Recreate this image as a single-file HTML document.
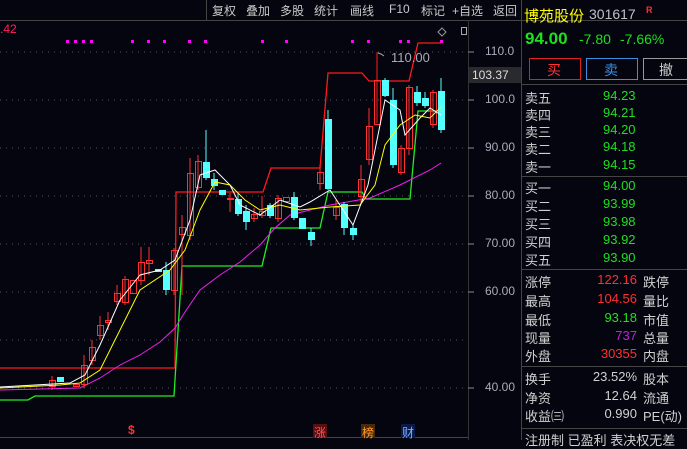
<!DOCTYPE html>
<html><head><meta charset="utf-8"><style>
body{margin:0;width:687px;height:440px;background:#05050f;overflow:hidden;font-family:"Liberation Sans","Noto Sans CJK SC",sans-serif;position:relative}
.t{position:absolute;white-space:nowrap}
.tb{position:absolute;top:2px;font-size:12px;color:#c8c8c8}
.lbl{position:absolute;left:525px;font-size:13px;color:#d0d0d0}
.v{position:absolute;font-size:13px;text-align:right}
.g{color:#1ee01e}.r{color:#ff3030}
</style></head><body>
<svg width="687" height="440" style="position:absolute;left:0;top:0">
<g stroke="#555" stroke-dasharray="1,5" stroke-width="1">
<line x1="0" y1="52" x2="468" y2="52"/><line x1="0" y1="100" x2="468" y2="100"/><line x1="0" y1="148" x2="468" y2="148"/><line x1="0" y1="196" x2="468" y2="196"/><line x1="0" y1="244" x2="468" y2="244"/><line x1="0" y1="292" x2="468" y2="292"/><line x1="0" y1="340" x2="468" y2="340"/><line x1="0" y1="388" x2="468" y2="388"/>
</g>
<line x1="0" y1="20.5" x2="687" y2="20.5" stroke="#444"/>
<line x1="206.5" y1="0" x2="206.5" y2="20" stroke="#444"/>
<line x1="521.5" y1="0" x2="521.5" y2="440" stroke="#444"/>
<line x1="468.5" y1="20" x2="468.5" y2="440" stroke="#333"/>
<line x1="0" y1="437.5" x2="468" y2="437.5" stroke="#444"/>
<g stroke="#888"><line x1="468" y1="52" x2="474" y2="52"/><line x1="468" y1="100" x2="474" y2="100"/><line x1="468" y1="148" x2="474" y2="148"/><line x1="468" y1="196" x2="474" y2="196"/><line x1="468" y1="244" x2="474" y2="244"/><line x1="468" y1="292" x2="474" y2="292"/><line x1="468" y1="388" x2="474" y2="388"/></g>
<g fill="#ff00ff"><rect x="66" y="40" width="3" height="3"/><rect x="74" y="40" width="3" height="3"/><rect x="82" y="40" width="3" height="3"/><rect x="90" y="40" width="3" height="3"/><rect x="131" y="40" width="3" height="3"/><rect x="147" y="40" width="3" height="3"/><rect x="163" y="40" width="3" height="3"/><rect x="188" y="40" width="3" height="3"/><rect x="204" y="40" width="3" height="3"/><rect x="261" y="40" width="3" height="3"/><rect x="285" y="40" width="3" height="3"/><rect x="351" y="40" width="3" height="3"/><rect x="367" y="40" width="3" height="3"/><rect x="399" y="40" width="3" height="3"/><rect x="407" y="40" width="3" height="3"/><rect x="440" y="40" width="3" height="3"/></g>
<polyline fill="none" stroke="#ff1a1a" stroke-width="1.3" points="0,368 175,368 176,192 240,192 263,192 271,168 320,168 328,73 362,73 369,81 409,81 418,43 441,43"/>
<line x1="377" y1="52" x2="377" y2="123" stroke="#ff1a1a"/>
<polyline fill="none" stroke="#22ee22" stroke-width="1.3" points="0,400 28,400 35,396 174,396 182,266 262,266 271,228 320,228 328,192 362,192 366,199 410,199 418,111 441,111"/>
<polyline fill="none" stroke="#ee22ee" stroke-width="1" points="0,390 80,388 100,378 120,365 140,355 160,342 175,328 185,312 200,290 220,275 240,262 260,245 275,228 290,215 310,210 330,205 370,198 400,185 430,170 441,163"/>
<g stroke-width="1">
<g stroke="#ff3030" fill="none">
<rect x="49.5" y="380.5" width="6" height="6"/><rect x="73.5" y="384.5" width="6" height="2"/><rect x="81.5" y="365.5" width="6" height="19"/><rect x="89.5" y="347.5" width="6" height="13"/><rect x="97.5" y="325.5" width="6" height="10"/><rect x="105.5" y="320.5" width="6" height="2"/><rect x="114.5" y="293.5" width="6" height="8"/><rect x="122.5" y="279.5" width="6" height="23"/><rect x="130.5" y="280.5" width="6" height="13"/><rect x="138.5" y="262.5" width="6" height="18"/><rect x="146.5" y="260.5" width="6" height="3"/><rect x="171.5" y="250.5" width="6" height="40"/><rect x="179.5" y="227.5" width="6" height="7"/><rect x="187.5" y="173.5" width="6" height="62"/><rect x="195.5" y="161.5" width="6" height="26"/><rect x="227.5" y="198.5" width="6" height="1"/>
<rect x="251.5" y="214.5" width="6" height="4"/><rect x="259.5" y="211.5" width="6" height="4"/><rect x="275.5" y="198.5" width="6" height="20"/><rect x="283.5" y="197.5" width="6" height="4"/><rect x="317.5" y="172.5" width="6" height="11"/><rect x="333.5" y="207.5" width="6" height="8"/><rect x="358.5" y="179.5" width="6" height="17"/><rect x="366.5" y="126.5" width="6" height="33"/><rect x="374.5" y="80.5" width="6" height="44"/><rect x="398.5" y="148.5" width="6" height="24"/><rect x="406.5" y="87.5" width="6" height="61"/><rect x="430.5" y="92.5" width="6" height="32"/>
<line x1="52" y1="376" x2="52" y2="390"/><line x1="84" y1="355" x2="84" y2="388"/><line x1="92" y1="340" x2="92" y2="365"/><line x1="100" y1="316" x2="100" y2="340"/><line x1="108" y1="312" x2="108" y2="330"/><line x1="117" y1="285" x2="117" y2="305"/><line x1="125" y1="276" x2="125" y2="305"/><line x1="141" y1="247" x2="141" y2="285"/><line x1="149" y1="247" x2="149" y2="275"/><line x1="174" y1="248" x2="174" y2="295"/><line x1="182" y1="215" x2="182" y2="295"/><line x1="190" y1="158" x2="190" y2="240"/><line x1="198" y1="155" x2="198" y2="190"/><line x1="230" y1="193" x2="230" y2="212"/><line x1="254" y1="208" x2="254" y2="222"/><line x1="262" y1="196" x2="262" y2="218"/><line x1="278" y1="195" x2="278" y2="222"/><line x1="320" y1="165" x2="320" y2="190"/><line x1="336" y1="200" x2="336" y2="220"/><line x1="361" y1="165" x2="361" y2="205"/><line x1="369" y1="108" x2="369" y2="165"/><line x1="401" y1="145" x2="401" y2="175"/><line x1="409" y1="85" x2="409" y2="155"/><line x1="433" y1="90" x2="433" y2="128"/>
</g>
<g fill="#54ffff" stroke="#54ffff">
<line x1="206" y1="130" x2="206" y2="180"/><line x1="214" y1="173" x2="214" y2="190"/><line x1="238" y1="193" x2="238" y2="216"/><line x1="246" y1="205" x2="246" y2="230"/><line x1="270" y1="203" x2="270" y2="218"/><line x1="294" y1="192" x2="294" y2="220"/><line x1="311" y1="228" x2="311" y2="246"/><line x1="328" y1="110" x2="328" y2="190"/><line x1="344" y1="202" x2="344" y2="235"/><line x1="353" y1="224" x2="353" y2="240"/><line x1="385" y1="78" x2="385" y2="97"/><line x1="393" y1="88" x2="393" y2="168"/><line x1="417" y1="86" x2="417" y2="106"/><line x1="425" y1="92" x2="425" y2="108"/><line x1="441" y1="78" x2="441" y2="133"/><line x1="166" y1="262" x2="166" y2="295"/>
<rect x="57.5" y="377.5" width="6" height="4"/><rect x="155.5" y="269.5" width="6" height="2"/><rect x="163.5" y="270.5" width="6" height="19"/><rect x="203.5" y="162.5" width="6" height="15"/><rect x="211.5" y="179.5" width="6" height="6"/><rect x="219.5" y="190.5" width="6" height="4"/><rect x="235.5" y="199.5" width="6" height="14"/><rect x="243.5" y="211.5" width="6" height="10"/><rect x="267.5" y="205.5" width="6" height="10"/><rect x="291.5" y="197.5" width="6" height="20"/><rect x="299.5" y="218.5" width="6" height="10"/><rect x="308.5" y="232.5" width="6" height="7"/><rect x="325.5" y="119.5" width="6" height="69"/><rect x="341.5" y="204.5" width="6" height="23"/><rect x="350.5" y="228.5" width="6" height="6"/><rect x="382.5" y="80.5" width="6" height="15"/><rect x="390.5" y="100.5" width="6" height="64"/><rect x="414.5" y="92.5" width="6" height="10"/><rect x="422.5" y="98.5" width="6" height="7"/><rect x="438.5" y="91.5" width="6" height="38"/>
</g></g>
<polyline fill="none" stroke="#ffff00" stroke-width="1" points="0,388 60,385 80,383 100,370 120,330 140,290 170,270 185,250 200,210 215,182 230,185 245,200 260,210 280,205 300,210 330,207 360,205 375,185 385,145 400,125 415,115 430,118 441,107"/>
<polyline fill="none" stroke="#ffffff" stroke-width="1" points="0,387 70,383 85,375 100,345 120,300 140,275 160,270 175,260 190,220 200,175 215,170 230,185 240,205 260,215 280,200 300,207 310,202 330,190 353,225 368,185 385,100 400,110 405,135 420,118 430,108 441,115"/>
<polyline fill="none" stroke="#aaa" points="378,53 381,54 384,56"/>
<rect x="469" y="67" width="52" height="16" fill="#2a2a2e"/>
<rect x="529.5" y="58.5" width="51" height="21" fill="none" stroke="#e02020"/>
<rect x="586.5" y="58.5" width="51" height="21" fill="none" stroke="#3a8ee0"/>
<rect x="643.5" y="58.5" width="50" height="21" fill="none" stroke="#999"/>
<g stroke="#444"><line x1="522" y1="84.5" x2="687" y2="84.5"/><line x1="522" y1="176.5" x2="687" y2="176.5"/><line x1="522" y1="269.5" x2="687" y2="269.5"/><line x1="522" y1="366.5" x2="687" y2="366.5"/><line x1="522" y1="428.5" x2="687" y2="428.5"/></g>
<rect x="461.5" y="27.5" width="5" height="7" fill="none" stroke="#aaa"/>
<path d="M442 28 l4 4 -4 4 -4 -4z" fill="none" stroke="#999"/>
<rect x="313" y="424" width="14" height="14" fill="#5a1010"/><rect x="361" y="424" width="14" height="14" fill="#4a2a08"/><rect x="401" y="424" width="14" height="14" fill="#0a1a4a"/>
</svg>
<div class="tb" style="left:212px">复权</div><div class="tb" style="left:246px">叠加</div><div class="tb" style="left:280px">多股</div><div class="tb" style="left:314px">统计</div><div class="tb" style="left:350px">画线</div><div class="tb" style="left:389px">F10</div><div class="tb" style="left:421px">标记</div><div class="tb" style="left:452px">+自选</div><div class="tb" style="left:493px">返回</div>
<div class="t" style="left:0;top:22px;font-size:12px;color:#ff2060">.42</div>
<div class="t" style="left:391px;top:50px;font-size:13px;color:#aab">110.00</div>
<div class="t" style="left:485px;top:44px;font-size:12px;color:#aab">110.0</div>
<div class="t" style="left:472px;top:68px;font-size:12px;color:#ddd">103.37</div>
<div class="t" style="left:485px;top:92px;font-size:12px;color:#aab">100.0</div>
<div class="t" style="left:485px;top:140px;font-size:12px;color:#aab">90.00</div>
<div class="t" style="left:485px;top:188px;font-size:12px;color:#aab">80.00</div>
<div class="t" style="left:485px;top:236px;font-size:12px;color:#aab">70.00</div>
<div class="t" style="left:485px;top:284px;font-size:12px;color:#aab">60.00</div>
<div class="t" style="left:485px;top:380px;font-size:12px;color:#aab">40.00</div>
<div class="t" style="left:128px;top:423px;font-size:12px;color:#ff3030;font-weight:bold">$</div>
<div class="t" style="left:314px;top:424px;font-size:12px;color:#ff5050">涨</div>
<div class="t" style="left:362px;top:424px;font-size:12px;color:#ff9a30">榜</div>
<div class="t" style="left:402px;top:424px;font-size:12px;color:#7ab0ff">财</div>
<div class="t" style="left:524px;top:5px;font-size:15px;color:#ffff00">博苑股份</div>
<div class="t" style="left:589px;top:6px;font-size:14px;color:#c0c0c8">301617</div>
<div class="t" style="left:646px;top:5px;font-size:9px;color:#ff3030;font-weight:bold">R</div>
<div class="t g" style="left:525px;top:29px;font-size:17px;font-weight:bold">94.00</div>
<div class="t g" style="left:579px;top:31px;font-size:14px">-7.80</div>
<div class="t g" style="left:620px;top:31px;font-size:14px">-7.66%</div>
<div class="t" style="left:547px;top:60px;font-size:14px;color:#ff3030">买</div>
<div class="t" style="left:604px;top:60px;font-size:14px;color:#3a8ee0">卖</div>
<div class="t" style="left:659px;top:60px;font-size:14px;color:#ccc">撤</div>
<div class="lbl" style="top:88px">卖五</div><div class="v g" style="left:603px;top:88px">94.23</div>
<div class="lbl" style="top:105px">卖四</div><div class="v g" style="left:603px;top:105px">94.21</div>
<div class="lbl" style="top:122px">卖三</div><div class="v g" style="left:603px;top:122px">94.20</div>
<div class="lbl" style="top:139px">卖二</div><div class="v g" style="left:603px;top:139px">94.18</div>
<div class="lbl" style="top:157px">卖一</div><div class="v g" style="left:603px;top:157px">94.15</div>
<div class="lbl" style="top:178px">买一</div><div class="v g" style="left:603px;top:178px">94.00</div>
<div class="lbl" style="top:196px">买二</div><div class="v g" style="left:603px;top:196px">93.99</div>
<div class="lbl" style="top:214px">买三</div><div class="v g" style="left:603px;top:214px">93.98</div>
<div class="lbl" style="top:232px">买四</div><div class="v g" style="left:603px;top:232px">93.92</div>
<div class="lbl" style="top:250px">买五</div><div class="v g" style="left:603px;top:250px">93.90</div>
<div class="lbl" style="top:272px">涨停</div><div class="v r" style="right:50px;top:272px">122.16</div><div class="t" style="left:643px;top:272px;font-size:13px;color:#d0d0d0">跌停</div>
<div class="lbl" style="top:291px">最高</div><div class="v r" style="right:50px;top:291px">104.56</div><div class="t" style="left:643px;top:291px;font-size:13px;color:#d0d0d0">量比</div>
<div class="lbl" style="top:310px">最低</div><div class="v g" style="right:50px;top:310px">93.18</div><div class="t" style="left:643px;top:310px;font-size:13px;color:#d0d0d0">市值</div>
<div class="lbl" style="top:328px">现量</div><div class="v" style="right:50px;top:328px;color:#c020e0">737</div><div class="t" style="left:643px;top:328px;font-size:13px;color:#d0d0d0">总量</div>
<div class="lbl" style="top:346px">外盘</div><div class="v r" style="right:50px;top:346px">30355</div><div class="t" style="left:643px;top:346px;font-size:13px;color:#d0d0d0">内盘</div>
<div class="lbl" style="top:369px">换手</div><div class="v" style="right:50px;top:369px;color:#d0d0d0">23.52%</div><div class="t" style="left:643px;top:369px;font-size:13px;color:#d0d0d0">股本</div>
<div class="lbl" style="top:388px">净资</div><div class="v" style="right:50px;top:388px;color:#d0d0d0">12.64</div><div class="t" style="left:643px;top:388px;font-size:13px;color:#d0d0d0">流通</div>
<div class="lbl" style="top:406px">收益㈢</div><div class="v" style="right:50px;top:406px;color:#d0d0d0">0.990</div><div class="t" style="left:643px;top:406px;font-size:13px;color:#d0d0d0">PE(动)</div>
<div class="lbl" style="top:430px">注册制 已盈利 表决权无差</div>
</body></html>
